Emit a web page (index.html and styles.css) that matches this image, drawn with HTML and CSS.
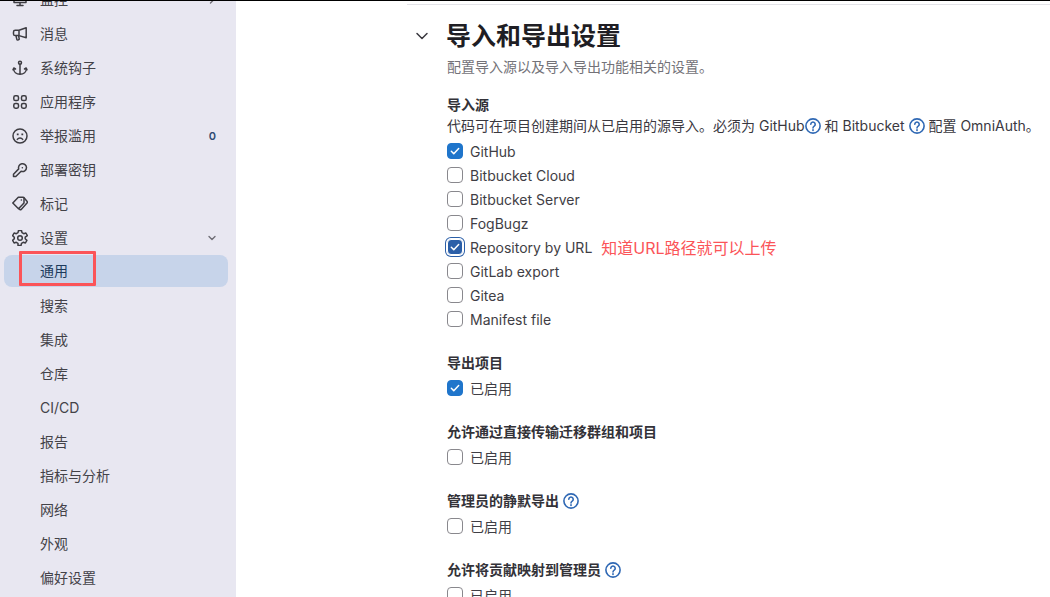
FILE: index.html
```html
<!DOCTYPE html>
<html lang="zh-CN">
<head>
<meta charset="utf-8">
<title>导入和导出设置</title>
<link rel="stylesheet" href="styles.css">
</head>
<body>
<div class="page">
  <aside class="sidebar">
    <ul class="nav">
      <li class="item"><svg class="ico" viewBox="0 0 16 16"><path d="M2 2.500h12v8H2zM5 13.500h6M8 10.500v3" /></svg><span class="label">监控</span><svg class="chev" viewBox="0 0 16 16"><path d="M6 4l4 4-4 4"/></svg></li>
      <li class="item"><svg class="ico" viewBox="0 0 16 16"><path d="M14.200 1.800v10L7 9.600H3.200a1.700 1.700 0 0 1-1.700-1.700V6a1.700 1.700 0 0 1 1.700-1.700H7zM7 4.300v5.300M4 9.800l.8 3.400a1 1 0 0 0 1.200.7l.6-.2a.9.9 0 0 0 .6-1.100L6.600 10"/></svg><span class="label">消息</span></li>
      <li class="item"><svg class="ico" viewBox="0 0 16 16"><circle cx="8" cy="2.800" r="1.500"/><path d="M8 4.300v10M1.600 8.200c0 3.800 2.800 6 6.400 6s6.400-2.200 6.400-6M1 9.800l.8-1.800 1.700 1M15 9.800L14.200 8l-1.700 1"/></svg><span class="label">系统钩子</span></li>
      <li class="item"><svg class="ico" viewBox="0 0 16 16"><rect x="1.800" y="1.800" width="4.700" height="4.700" rx="1.600"/><rect x="9.500" y="1.800" width="4.700" height="4.700" rx="1.600"/><rect x="1.800" y="9.500" width="4.700" height="4.700" rx="1.600"/><rect x="9.500" y="9.500" width="4.700" height="4.700" rx="1.600"/></svg><span class="label">应用程序</span></li>
      <li class="item"><svg class="ico" viewBox="0 0 16 16"><circle cx="8" cy="8" r="7"/><path d="M5.300 11.400c.7-1 1.600-1.500 2.700-1.500s2 .5 2.700 1.500"/><path class="dot" d="M4.800 5.500h1.800v1.800H4.800zM9.400 5.500h1.800v1.800H9.400z"/></svg><span class="label">举报滥用</span><span class="count">0</span></li>
      <li class="item"><svg class="ico" viewBox="0 0 16 16"><path d="M14.500 5.500a4 4 0 0 1-5.400 3.800L3.800 14.500H1.500v-2.300l5.200-5.300A4 4 0 1 1 14.500 5.500z"/><path d="M10.300 5.700h.1"/></svg><span class="label">部署密钥</span></li>
      <li class="item"><svg class="ico" viewBox="0 0 16 16"><path d="M.8 7 6.300 1.300H11a1 1 0 0 1 1 1V7l-5.500 5.700z"/><path d="M11.800 1.600 15.200 5.400a1 1 0 0 1 0 1.400L9.200 13.400a1 1 0 0 1-1.400 0L7.300 13"/><path d="M9.300 4h.1"/></svg><span class="label">标记</span></li>
      <li class="item"><svg class="ico" viewBox="0 0 16 16"><path d="M6.500 1h3l.5 2.200 1.700 1 2.200-.7 1.500 2.600L13.200 7.700v1.600l1.700 1.600-1.500 2.600-2.200-.7-1.700 1-.5 2.200h-3L6 13.800l-1.700-1-2.200.7L.6 10.900l1.700-1.600V7.700L.6 6.100l1.500-2.600 2.200.7 1.700-1z" transform="translate(0 -.5)"/><circle cx="8" cy="8" r="2.300"/></svg><span class="label">设置</span><svg class="chev" viewBox="0 0 16 16"><path d="M4 6l4 4 4-4"/></svg></li>
      <li class="item sub active"><span class="label">通用</span></li>
      <li class="item sub"><span class="label">搜索</span></li>
      <li class="item sub"><span class="label">集成</span></li>
      <li class="item sub"><span class="label">仓库</span></li>
      <li class="item sub"><span class="label">CI/CD</span></li>
      <li class="item sub"><span class="label">报告</span></li>
      <li class="item sub"><span class="label">指标与分析</span></li>
      <li class="item sub"><span class="label">网络</span></li>
      <li class="item sub"><span class="label">外观</span></li>
      <li class="item sub"><span class="label">偏好设置</span></li>
    </ul>
    <div class="mark"></div>
  </aside>
  <main class="main">
    <section class="section">
      <header class="head">
        <svg class="collapse" viewBox="0 0 16 16"><path d="M3 5.500l5 5 5-5"/></svg>
        <h2 class="title">导入和导出设置</h2>
      </header>
      <div class="body">
        <p class="desc">配置导入源以及导入导出功能相关的设置。</p>
        <div class="group first">
          <h3 class="gt">导入源</h3>
          <p class="hint">代码可在项目创建期间从已启用的源导入。必须为 GitHub<svg class="help" viewBox="0 0 16 16"><use href="#q"/></svg> 和 Bitbucket <svg class="help" viewBox="0 0 16 16"><use href="#q"/></svg> 配置 OmniAuth。</p>
          <label class="chk"><span class="box on"><svg viewBox="0 0 16 16"><path d="M3.800 8.300l2.800 2.800 5.600-6"/></svg></span>GitHub</label>
          <label class="chk"><span class="box"></span>Bitbucket Cloud</label>
          <label class="chk"><span class="box"></span>Bitbucket Server</label>
          <label class="chk"><span class="box"></span>FogBugz</label>
          <label class="chk"><span class="box on focus"><svg viewBox="0 0 16 16"><path d="M3.800 8.300l2.800 2.800 5.600-6"/></svg></span>Repository by URL<span class="note">知道URL路径就可以上传</span></label>
          <label class="chk"><span class="box"></span>GitLab export</label>
          <label class="chk"><span class="box"></span>Gitea</label>
          <label class="chk"><span class="box"></span>Manifest file</label>
        </div>
        <div class="group">
          <h3 class="gt">导出项目</h3>
          <label class="chk"><span class="box on"><svg viewBox="0 0 16 16"><path d="M3.800 8.300l2.800 2.800 5.600-6"/></svg></span>已启用</label>
        </div>
        <div class="group">
          <h3 class="gt">允许通过直接传输迁移群组和项目</h3>
          <label class="chk"><span class="box"></span>已启用</label>
        </div>
        <div class="group">
          <h3 class="gt">管理员的静默导出 <svg class="help" viewBox="0 0 16 16"><use href="#q"/></svg></h3>
          <label class="chk"><span class="box"></span>已启用</label>
        </div>
        <div class="group">
          <h3 class="gt">允许将贡献映射到管理员 <svg class="help" viewBox="0 0 16 16"><use href="#q"/></svg></h3>
          <label class="chk"><span class="box"></span>已启用</label>
        </div>
      </div>
    </section>
  </main>
</div>
<svg class="defs" width="0" height="0"><defs><g id="q"><circle cx="8" cy="8" r="7.100"/><path d="M5.800 6.200a2.200 2.200 0 1 1 3.400 1.900c-.8.500-1.200.9-1.200 1.900"/><path d="M8 11.800v.6"/></g></defs></svg>
</body>
</html>
```
FILE: styles.css
```css
* { box-sizing: border-box; }
html, body { margin: 0; height: 597px; overflow: hidden; background: #fff; }
body { font-family: Inter, "Noto Sans CJK SC", sans-serif; font-size: 14px; color: #3a383f; }
.defs { position: absolute; }
.page { display: flex; height: 597px; overflow: hidden; border-top: 1px solid #000; }
.sidebar { position: relative; width: 236px; flex: none; background: #e8e7f1; overflow: hidden; }
.nav { list-style: none; margin: -17px 0 0; padding: 0 8px 0 4px; display: flex; flex-direction: column; gap: 2px; }
.item { display: flex; align-items: center; height: 32px; padding: 0 8px; border-radius: 8px; line-height: 20px; color: #434248; }
.label { flex: 1; white-space: nowrap; }
.ico { width: 16px; height: 16px; margin-right: 12px; flex: none; fill: none; stroke: #3d3c42; stroke-width: 1.500; stroke-linecap: round; stroke-linejoin: round; }
.ico .dot { fill: #3d3c42; stroke: none; }
.chev { width: 12px; height: 12px; margin-right: 2px; fill: none; stroke: #6e6d75; stroke-width: 1.800; stroke-linecap: round; stroke-linejoin: round; }
.count { font-size: 11px; font-weight: 600; color: #2f4a72; margin-right: 4px; }
.sub { padding-left: 36px; }
.nav .active { background: #c7d4ea; color: #1c3a5c; margin-top: -1px; margin-bottom: 1px; }
.mark { position: absolute; left: 19px; top: 250px; width: 77px; height: 35px; border: 3px solid #fb5458; border-radius: 1px; }
.main { flex: 1; padding: 3px 0 0 171px; min-width: 0; }
.section { border-top: 1px solid #e3e3e8; }
.head { display: flex; align-items: center; height: 40px; margin-top: 11px; }
.collapse { width: 16px; height: 16px; margin: 0 16px 0 7px; fill: none; stroke: #3a383f; stroke-width: 1.500; stroke-linecap: round; stroke-linejoin: round; }
.title { margin: 0; font-size: 25px; font-weight: 700; line-height: 40px; color: #1f1e24; white-space: nowrap; }
.body { padding-left: 40px; }
.desc { margin: 1px 0 0; line-height: 20px; color: #737278; white-space: nowrap; }
.group { margin-top: 22px; }
.group.first { margin-top: 18px; }
.gt { display: flex; align-items: center; gap: 4px; margin: 0; height: 20px; font-size: 14px; font-weight: 700; line-height: 20px; color: #333238; white-space: nowrap; }
.hint { margin: 1px 0 3px; height: 20px; line-height: 20px; color: #3a383f; white-space: nowrap; }
.help { display: inline-block; width: 16px; height: 16px; vertical-align: -3px; fill: none; stroke: #2f68b4; stroke-width: 1.600; stroke-linecap: round; }
.chk { display: flex; align-items: center; height: 24px; white-space: nowrap; color: #3f3e45; }
.gt + .chk { margin-top: 3px; }
.box { display: flex; width: 16px; height: 16px; margin-right: 7px; border: 1px solid #89888d; border-radius: 4px; background: #fff; flex: none; }
.box.on { background: #1f75cb; border-color: #1f75cb; }
.box svg { width: 14px; height: 14px; fill: none; stroke: #fff; stroke-width: 1.700; stroke-linecap: round; stroke-linejoin: round; }
.box.focus { background: #2b5fa8; border-color: #fff; box-shadow: 0 0 0 1px #fff, 0 0 0 2px #2b5fa8; }
.note { margin-left: 9px; font-size: 16px; color: #fb5458; }
```
